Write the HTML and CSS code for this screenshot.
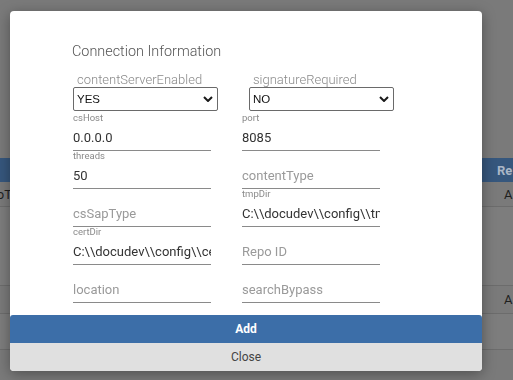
FILE: index.html
```html
<!DOCTYPE html>
<html>

<head>
    <link rel="stylesheet" href="styles.css">
</head>

<body>
    <div class="page">
        <div class="list">
            <div class="row head">
                <div class="cell first"></div>
                <div class="cell mid"></div>
                <div class="cell last">Re</div>
            </div>
            <div class="row r1">
                <div class="cell first"><span>oT</span></div>
                <div class="cell mid"></div>
                <div class="cell last">A</div>
            </div>
            <div class="row r2">
                <div class="cell first"></div>
                <div class="cell mid"></div>
                <div class="cell last"></div>
            </div>
            <div class="row r3">
                <div class="cell first"></div>
                <div class="cell mid"></div>
                <div class="cell last">A</div>
            </div>
            <div class="row r4">
                <div class="cell first"></div>
                <div class="cell mid"></div>
                <div class="cell last"></div>
            </div>
        </div>
    </div>

    <div class="modal">
        <div class="modal-body">
            <h3 class="title">Connection Information</h3>

            <div class="choices">
                <div class="choice">
                    <label class="choice-label" for="contentServerEnabled">contentServerEnabled</label>
                    <div class="select-wrap">
                        <select id="contentServerEnabled">
                            <option value="YES" selected>YES</option>
                            <option value="NO">NO</option>
                        </select>
                        <svg class="chevron" viewBox="0 0 10 6"><polyline points="1,1 5,5 9,1" /></svg>
                    </div>
                </div>
                <div class="choice">
                    <label class="choice-label" for="signatureRequired">signatureRequired</label>
                    <div class="select-wrap">
                        <select id="signatureRequired">
                            <option value="YES">YES</option>
                            <option value="NO" selected>NO</option>
                        </select>
                        <svg class="chevron" viewBox="0 0 10 6"><polyline points="1,1 5,5 9,1" /></svg>
                    </div>
                </div>
            </div>

            <div class="fields">
                <div class="field">
                    <label class="field-label" for="csHost">csHost</label>
                    <input type="text" id="csHost" value="0.0.0.0">
                </div>
                <div class="field">
                    <label class="field-label" for="port">port</label>
                    <input type="text" id="port" value="8085">
                </div>
                <div class="field">
                    <label class="field-label" for="threads">threads</label>
                    <input type="text" id="threads" value="50">
                </div>
                <div class="field">
                    <label class="field-label" for="contentType"></label>
                    <input type="text" id="contentType" placeholder="contentType">
                </div>
                <div class="field">
                    <label class="field-label" for="csSapType"></label>
                    <input type="text" id="csSapType" placeholder="csSapType">
                </div>
                <div class="field">
                    <label class="field-label" for="tmpDir">tmpDir</label>
                    <input type="text" id="tmpDir" value="C:\\docudev\\config\\tmp\\">
                </div>
                <div class="field">
                    <label class="field-label" for="certDir">certDir</label>
                    <input type="text" id="certDir" value="C:\\docudev\\config\\cert\\">
                </div>
                <div class="field">
                    <label class="field-label" for="repoId"></label>
                    <input type="text" id="repoId" placeholder="Repo ID">
                </div>
                <div class="field">
                    <label class="field-label" for="location"></label>
                    <input type="text" id="location" placeholder="location">
                </div>
                <div class="field">
                    <label class="field-label" for="searchBypass"></label>
                    <input type="text" id="searchBypass" placeholder="searchBypass">
                </div>
            </div>
        </div>

        <button class="btn btn-add">Add</button>
        <button class="btn btn-close">Close</button>
    </div>
</body>

</html>
```
FILE: styles.css
```css
body {
    margin: 0;
    height: 380px;
    overflow: hidden;
    background-color: #7a7a7a;
    font-family: Roboto, 'Liberation Sans', sans-serif;
}

/* page behind the dialog (already dimmed) */
.page {
    padding-top: 158px;
}

.row {
    display: flex;
    border-bottom: 1px solid #6c6c6c;
    font-size: 13px;
    color: #1e1e1e;
}

.row.head {
    height: 24px;
    background-color: #36577d;
    color: #aab6c6;
    font-weight: bold;
    border-bottom: 0;
}

.r1 {
    height: 24px;
}

.r2 {
    height: 78px;
    background-color: #7d7d7d;
}

.r3 {
    height: 27px;
}

.r4 {
    height: 35px;
    background-color: #7d7d7d;
}

.cell {
    display: flex;
    align-items: center;
    white-space: nowrap;
}

.cell.first {
    width: 12px;
    justify-content: flex-end;
}

.cell.mid {
    flex: 1;
}

.cell.last {
    width: 9px;
    padding-left: 7px;
    overflow: hidden;
}

.head .cell.last {
    width: 16px;
    padding-left: 0;
}

/* dialog */
.modal {
    position: fixed;
    left: 10px;
    top: 11px;
    width: 472px;
    height: 360px;
    display: flex;
    flex-direction: column;
    background-color: #fff;
    border-radius: 4px;
    box-shadow: 0 3px 14px rgba(0, 0, 0, 0.35);
    overflow: hidden;
}

.modal-body {
    flex: 1;
    padding: 32px 0 0 63px;
}

.title {
    margin: 0 0 12px -1px;
    font-size: 14.4px;
    font-weight: 300;
    line-height: 18px;
    color: #555;
}

.choices {
    display: flex;
}

.choice {
    width: 176px;
}

.choice-label {
    display: block;
    padding-left: 4px;
    font-size: 13px;
    font-weight: 300;
    line-height: 14px;
    color: #8a8a8a;
}

.select-wrap {
    position: relative;
    width: 145px;
    height: 24px;
}

.select-wrap select {
    appearance: none;
    -webkit-appearance: none;
    display: block;
    width: 100%;
    height: 100%;
    margin: 0;
    padding: 0 0 0 3px;
    border: 1px solid #6a6a6a;
    border-radius: 2px;
    background-color: #fff;
    font-family: 'Liberation Sans', Arial, sans-serif;
    font-size: 11.5px;
    color: #111;
    outline: none;
}

.chevron {
    position: absolute;
    right: 5px;
    top: 9px;
    width: 10px;
    height: 6px;
    fill: none;
    stroke: #1a1a1a;
    stroke-width: 2;
    pointer-events: none;
}

.fields {
    display: grid;
    grid-template-columns: 138px 138px;
    column-gap: 31px;
    margin-top: 2px;
}

.field-label {
    display: block;
    height: 11px;
    font-size: 9.5px;
    line-height: 9px;
    color: #8a8a8a;
}

.field input {
    display: block;
    width: 100%;
    height: 27px;
    box-sizing: border-box;
    margin: 0;
    padding: 0;
    border: 0;
    border-bottom: 1px solid #8a8a8a;
    background: transparent;
    font-family: Roboto, sans-serif;
    font-size: 13px;
    color: #333;
    outline: none;
}

.field input::placeholder {
    color: #9a9a9a;
}

.btn {
    display: block;
    width: 100%;
    height: 28px;
    margin: 0;
    border: 0;
    font-family: Roboto, sans-serif;
    font-size: 12px;
    cursor: pointer;
}

.btn-add {
    background-color: #3c6ea8;
    color: #fff;
    font-weight: bold;
    border-radius: 3px 3px 0 0;
}

.btn-close {
    background-color: #e0e0e0;
    color: #444;
}
```
